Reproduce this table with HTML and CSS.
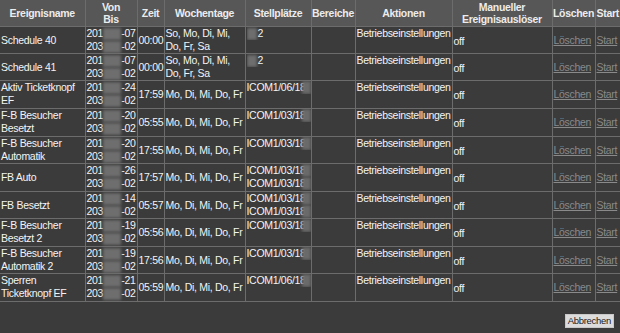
FILE: index.html
```html
<!DOCTYPE html>
<html lang="de">
<head>
<meta charset="utf-8">
<link rel="stylesheet" href="styles.css">
</head>
<body>
<table class="events">
<colgroup>
<col class="c-name"><col class="c-date"><col class="c-time"><col class="c-days"><col class="c-place"><col class="c-area"><col class="c-act"><col class="c-man"><col class="c-del"><col class="c-start">
</colgroup>
<thead>
<tr>
<th>Ereignisname</th><th>Von<br>Bis</th><th>Zeit</th><th>Wochentage</th><th>Stellplätze</th><th>Bereiche</th><th>Aktionen</th><th>Manueller<br>Ereignisauslöser</th><th>Löschen</th><th>Start</th>
</tr>
</thead>
<tbody>
<tr>
<td>Schedule 40</td>
<td><div class="d"><span>201</span><i class="blur bw"></i><span>-07</span></div><div class="d"><span>203</span><i class="blur bw"></i><span>-02</span></div></td>
<td>00:00</td><td>So, Mo, Di, Mi, Do, Fr, Sa</td>
<td class="top"><div class="pl"><i class="blur bs"></i>2</div></td>
<td></td><td class="top">Betriebseinstellungen</td><td class="off">off</td>
<td><a href="#">Löschen</a></td><td><a href="#">Start</a></td>
</tr>
<tr>
<td>Schedule 41</td>
<td><div class="d"><span>201</span><i class="blur bw"></i><span>-07</span></div><div class="d"><span>203</span><i class="blur bw"></i><span>-02</span></div></td>
<td>00:00</td><td>So, Mo, Di, Mi, Do, Fr, Sa</td>
<td class="top"><div class="pl"><i class="blur bs"></i>2</div></td>
<td></td><td class="top">Betriebseinstellungen</td><td class="off">off</td>
<td><a href="#">Löschen</a></td><td><a href="#">Start</a></td>
</tr>
<tr class="t">
<td>Aktiv Ticketknopf EF</td>
<td><div class="d"><span>201</span><i class="blur bw"></i><span>-24</span></div><div class="d"><span>203</span><i class="blur bw"></i><span>-02</span></div></td>
<td>17:59</td><td>Mo, Di, Mi, Do, Fr</td>
<td class="top"><div class="pl cut">ICOM1/06/18</div></td>
<td></td><td class="top">Betriebseinstellungen</td><td class="off">off</td>
<td><a href="#">Löschen</a></td><td><a href="#">Start</a></td>
</tr>
<tr class="t">
<td>F-B Besucher Besetzt</td>
<td><div class="d"><span>201</span><i class="blur bw"></i><span>-20</span></div><div class="d"><span>203</span><i class="blur bw"></i><span>-02</span></div></td>
<td>05:55</td><td>Mo, Di, Mi, Do, Fr</td>
<td class="top"><div class="pl cut">ICOM1/03/18</div></td>
<td></td><td class="top">Betriebseinstellungen</td><td class="off">off</td>
<td><a href="#">Löschen</a></td><td><a href="#">Start</a></td>
</tr>
<tr>
<td>F-B Besucher Automatik</td>
<td><div class="d"><span>201</span><i class="blur bw"></i><span>-20</span></div><div class="d"><span>203</span><i class="blur bw"></i><span>-02</span></div></td>
<td>17:55</td><td>Mo, Di, Mi, Do, Fr</td>
<td class="top"><div class="pl cut">ICOM1/03/18</div></td>
<td></td><td class="top">Betriebseinstellungen</td><td class="off">off</td>
<td><a href="#">Löschen</a></td><td><a href="#">Start</a></td>
</tr>
<tr class="t">
<td>FB Auto</td>
<td><div class="d"><span>201</span><i class="blur bw"></i><span>-26</span></div><div class="d"><span>203</span><i class="blur bw"></i><span>-02</span></div></td>
<td>17:57</td><td>Mo, Di, Mi, Do, Fr</td>
<td class="top"><div class="pl cut">ICOM1/03/18</div><div class="pl cut">ICOM1/03/18</div></td>
<td></td><td class="top">Betriebseinstellungen</td><td class="off">off</td>
<td><a href="#">Löschen</a></td><td><a href="#">Start</a></td>
</tr>
<tr>
<td>FB Besetzt</td>
<td><div class="d"><span>201</span><i class="blur bw"></i><span>-14</span></div><div class="d"><span>203</span><i class="blur bw"></i><span>-02</span></div></td>
<td>05:57</td><td>Mo, Di, Mi, Do, Fr</td>
<td class="top"><div class="pl cut">ICOM1/03/18</div><div class="pl cut">ICOM1/03/18</div></td>
<td></td><td class="top">Betriebseinstellungen</td><td class="off">off</td>
<td><a href="#">Löschen</a></td><td><a href="#">Start</a></td>
</tr>
<tr class="t">
<td>F-B Besucher Besetzt 2</td>
<td><div class="d"><span>201</span><i class="blur bw"></i><span>-19</span></div><div class="d"><span>203</span><i class="blur bw"></i><span>-02</span></div></td>
<td>05:56</td><td>Mo, Di, Mi, Do, Fr</td>
<td class="top"><div class="pl cut">ICOM1/03/18</div></td>
<td></td><td class="top">Betriebseinstellungen</td><td class="off">off</td>
<td><a href="#">Löschen</a></td><td><a href="#">Start</a></td>
</tr>
<tr>
<td>F-B Besucher Automatik 2</td>
<td><div class="d"><span>201</span><i class="blur bw"></i><span>-19</span></div><div class="d"><span>203</span><i class="blur bw"></i><span>-02</span></div></td>
<td>17:56</td><td>Mo, Di, Mi, Do, Fr</td>
<td class="top"><div class="pl cut">ICOM1/03/18</div></td>
<td></td><td class="top">Betriebseinstellungen</td><td class="off">off</td>
<td><a href="#">Löschen</a></td><td><a href="#">Start</a></td>
</tr>
<tr class="t">
<td>Sperren Ticketknopf EF</td>
<td><div class="d"><span>201</span><i class="blur bw"></i><span>-21</span></div><div class="d"><span>203</span><i class="blur bw"></i><span>-02</span></div></td>
<td>05:59</td><td>Mo, Di, Mi, Do, Fr</td>
<td class="top"><div class="pl cut">ICOM1/06/18</div></td>
<td></td><td class="top">Betriebseinstellungen</td><td class="off">off</td>
<td><a href="#">Löschen</a></td><td><a href="#">Start</a></td>
</tr>
</tbody>
</table>
<div class="actions"><button class="btn">Abbrechen</button></div>
</body>
</html>
```

FILE: styles.css
```css
html, body {
  margin: 0;
  padding: 0;
  background: #3b3b3b;
}
body {
  font-family: "Liberation Sans", Arial, sans-serif;
  font-size: 10.5px;
  letter-spacing: -0.3px;
  color: #f4f4f4;
  width: 620px;
  height: 333px;
  overflow: hidden;
}
.events {
  width: 620px;
  table-layout: fixed;
  border-collapse: collapse;
  line-height: 13px;
}
.c-name { width: 85px; }
.c-date { width: 52px; }
.c-time { width: 27px; }
.c-days { width: 81px; }
.c-place { width: 66px; }
.c-area { width: 44px; }
.c-act { width: 97px; }
.c-man { width: 100px; }
.c-del { width: 43px; }
.c-start { width: 25px; }
.events th {
  background: #575757;
  color: #ececec;
  font-weight: bold;
  padding: 0;
  text-align: center;
  vertical-align: middle;
  border: 1px solid #6c6c6c;
  border-top: none;
  white-space: nowrap;
  overflow: hidden;
  line-height: 12.5px;
  height: 26px;
}
.events th:first-child, .events td:first-child { border-left: none; }
.events th:last-child, .events td:last-child { border-right: none; }
.events td {
  padding: 0 0 0 1px;
  vertical-align: middle;
  border: 1px solid #6c6c6c;
  overflow: hidden;
}
.events tr.t td { padding-bottom: 1px; }
.events td.top { vertical-align: top; }
.events td.off { padding-top: 3px; }
.d {
  display: flex;
  justify-content: space-between;
  align-items: center;
  white-space: nowrap;
  padding-right: 1px;
}
.blur {
  display: inline-block;
  background: #6e6e6e;
  filter: blur(1.6px);
  height: 12px;
}
.bw { width: 18px; }
.bs { width: 10px; vertical-align: middle; margin-right: 1px; }
.pl {
  white-space: nowrap;
  overflow: hidden;
  position: relative;
}
.pl.cut::after {
  content: "";
  position: absolute;
  right: 0;
  top: 0;
  width: 9px;
  height: 13px;
  background: #6a6a6a;
  filter: blur(1.5px);
}
.events a {
  color: #8a8a8a;
  text-decoration: underline;
}
.actions {
  display: flex;
  justify-content: flex-end;
  padding: 12px 6px 0 0;
}
.btn {
  font-family: "Liberation Sans", Arial, sans-serif;
  font-size: 9.5px;
  letter-spacing: -0.3px;
  color: #222;
  background: #dcdcdc;
  border: 1px solid #c8c8c8;
  padding: 0 2px;
  height: 14px;
  line-height: 12px;
}
```
